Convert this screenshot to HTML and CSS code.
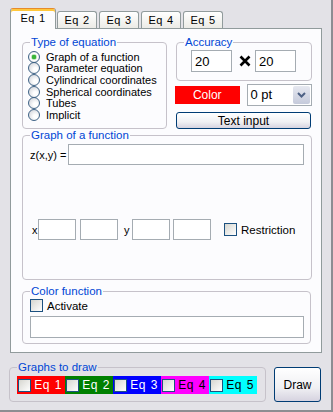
FILE: index.html
```html
<!DOCTYPE html>
<html lang="en">
<head>
  <meta charset="UTF-8">
  <meta name="viewport" content="width=device-width, initial-scale=1.0">
  <title>Graph settings</title>
  <link rel="stylesheet" href="styles.css">
</head>
<body>
  <div class="window">
    <div class="tabs">
      <div class="tab active">Eq 1</div>
      <div class="tab">Eq 2</div>
      <div class="tab">Eq 3</div>
      <div class="tab">Eq 4</div>
      <div class="tab">Eq 5</div>
    </div>

    <div class="panel">
      <div class="top-row">
        <fieldset class="group type-group">
          <legend>Type of equation</legend>
          <div class="radio-list">
            <label class="radio-row"><span class="radio checked"></span>Graph of a function</label>
            <label class="radio-row"><span class="radio"></span>Parameter equation</label>
            <label class="radio-row"><span class="radio"></span>Cylindrical coordinates</label>
            <label class="radio-row"><span class="radio"></span>Spherical coordinates</label>
            <label class="radio-row"><span class="radio"></span>Tubes</label>
            <label class="radio-row"><span class="radio"></span>Implicit</label>
          </div>
        </fieldset>

        <div class="right-col">
          <fieldset class="group accuracy">
            <legend>Accuracy</legend>
            <div class="acc-row">
              <input class="field acc-field" type="text" value="20">
              <svg class="times" width="12" height="12" viewBox="0 0 12 12">
                <path d="M1.5 1.5 L10.5 10.5 M10.5 1.5 L1.5 10.5" stroke="#000" stroke-width="2.6" fill="none"/>
              </svg>
              <input class="field acc-field" type="text" value="20">
            </div>
          </fieldset>
          <div class="color-row">
            <div class="color-btn">Color</div>
            <div class="select">
              <span class="select-value">0 pt</span>
              <span class="select-drop">
                <svg width="9" height="6" viewBox="0 0 9 6">
                  <path d="M1 1 L4.5 4.5 L8 1" stroke="#4d6185" stroke-width="2" fill="none"/>
                </svg>
              </span>
            </div>
          </div>
          <button class="btn text-input">Text input</button>
        </div>
      </div>

      <fieldset class="group graph-group">
        <legend>Graph of a function</legend>
        <div class="graph-body">
          <div class="z-row">
            <span class="z-label">z(x,y) =</span>
            <input class="field z-field" type="text">
          </div>
          <div class="xy-row">
            <span class="axis-label x-label">x</span>
            <input class="field small-field" type="text">
            <input class="field small-field gap-field" type="text">
            <span class="axis-label y-label">y</span>
            <input class="field small-field" type="text">
            <input class="field small-field gap-field-2" type="text">
            <label class="check-row restriction"><span class="check"></span>Restriction</label>
          </div>
        </div>
      </fieldset>

      <fieldset class="group colorfn-group">
        <legend>Color function</legend>
        <div class="colorfn-body">
          <label class="check-row"><span class="check"></span>Activate</label>
          <input class="field colorfn-field" type="text">
        </div>
      </fieldset>
    </div>

    <div class="bottom">
      <fieldset class="group draw-group">
        <legend>Graphs to draw</legend>
        <div class="eq-list">
          <div class="eq-item eq-red"><span class="check"></span><span class="eq-name">Eq 1</span></div>
          <div class="eq-item eq-green"><span class="check"></span><span class="eq-name">Eq 2</span></div>
          <div class="eq-item eq-blue"><span class="check"></span><span class="eq-name">Eq 3</span></div>
          <div class="eq-item eq-magenta"><span class="check"></span><span class="eq-name">Eq 4</span></div>
          <div class="eq-item eq-cyan"><span class="check"></span><span class="eq-name">Eq 5</span></div>
        </div>
      </fieldset>
      <button class="btn draw">Draw</button>
    </div>
  </div>
</body>
</html>
```

FILE: styles.css
```css
body {
  margin: 0;
  background-color: #e3e2e7;
  font-family: "Liberation Sans", Arial, sans-serif;
  font-size: 11px;
  color: #000;
}

.window {
  width: 333px;
  height: 412px;
  box-sizing: border-box;
  border-right: 2px solid #8d8d92;
  border-bottom: 2px solid #8d8d92;
  overflow: hidden;
}

/* tabs */

.tabs {
  display: flex;
  align-items: flex-end;
  height: 20px;
  margin-top: 8px;
  padding-left: 10px;
  gap: 2px;
}

.tab {
  box-sizing: border-box;
  width: 40px;
  height: 17px;
  border: 1px solid #919b9c;
  border-bottom: none;
  border-radius: 3px 3px 0 0;
  background: linear-gradient(#ffffff, #ecebe6);
  text-align: center;
  line-height: 16px;
  font-size: 11px;
  letter-spacing: 0.3px;
  word-spacing: 1px;
}

.tab.active {
  position: relative;
  z-index: 1;
  width: 46px;
  height: 21px;
  margin-bottom: -1px;
  margin-right: -1px;
  border-top: 1px solid #e68b2c;
  box-shadow: inset 0 2px #ffc73c;
  background: #fcfcfe;
  line-height: 18px;
}

.panel {
  box-sizing: border-box;
  width: 312px;
  margin-left: 10px;
  border: 1px solid #919b9c;
  background-color: #fcfcfe;
  padding: 7px 9px 8px 11px;
}

/* group boxes */

.group {
  margin: 0;
  padding: 0;
  min-width: 0;
  border: 1px solid #c6c2ca;
  border-radius: 4px;
}

.group legend {
  margin-left: 7px;
  padding: 0 1px;
  font-size: 11.5px;
  line-height: 13px;
  color: #0046d5;
}

.top-row {
  display: grid;
  grid-template-columns: 145px 137px;
  gap: 8px;
}

.radio-list {
  padding: 2px 0 6px 5px;
}

.radio-row {
  display: flex;
  align-items: center;
  height: 11.6px;
  white-space: nowrap;
}

.radio {
  box-sizing: border-box;
  width: 12px;
  height: 12px;
  margin-right: 6px;
  border: 1px solid #3f6386;
  border-radius: 50%;
  background: radial-gradient(circle at 65% 65%, #ffffff 20%, #d7d9de 80%);
  flex: none;
}

.radio.checked {
  background: radial-gradient(circle, #3ab53a 0 2px, #bfe3bf 2.5px, #ffffff 3.5px, #d7d9de 100%);
}

/* accuracy */

.accuracy {
  margin-left: 1px;
}

.acc-row {
  display: flex;
  align-items: center;
  padding: 1px 0 8px 14px;
}

.field {
  box-sizing: border-box;
  height: 21px;
  margin: 0;
  border: 1px solid #a5acb2;
  background: #fff;
  font-family: "Liberation Sans", Arial, sans-serif;
  font-size: 13px;
  padding: 0 3px;
  outline: none;
}

.acc-field {
  width: 41px;
  height: 22px;
}

.times {
  margin: 0 4px 0 7px;
}

.color-row {
  display: flex;
  align-items: center;
  height: 22px;
  margin-top: 3px;
}

.color-btn {
  width: 65px;
  height: 18px;
  line-height: 18px;
  background-color: #ff0000;
  color: #fff;
  text-align: center;
  font-size: 12px;
}

.select {
  box-sizing: border-box;
  display: flex;
  width: 66px;
  height: 22px;
  margin-left: 7px;
  border: 1px solid #a5acb2;
  background: #fff;
}

.select-value {
  flex: 1;
  padding-left: 3px;
  line-height: 20px;
  font-size: 13px;
}

.select-drop {
  display: flex;
  align-items: center;
  justify-content: center;
  width: 17px;
  margin: 1px;
  border-radius: 2px;
  background: linear-gradient(#e6e8f0, #c5cadb);
}

.btn {
  box-sizing: border-box;
  border: 1px solid #003c74;
  border-radius: 3px;
  background: linear-gradient(#ffffff 0%, #f0f0f3 60%, #d6d3e0 100%);
  font-family: "Liberation Sans", Arial, sans-serif;
  font-size: 12px;
  color: #000;
  padding: 0;
}

.text-input {
  width: 135px;
  height: 17px;
  margin: 6px 0 0 1px;
  line-height: 14px;
}

/* graph of a function */

.graph-group {
  margin-top: 0;
}

.graph-body {
  padding: 2px 7px 39px 7px;
}

.z-row {
  display: flex;
  align-items: center;
}

.z-label {
  width: 38px;
  font-size: 11px;
}

.z-field {
  flex: 1;
}

.xy-row {
  display: flex;
  align-items: center;
  margin-top: 54px;
}

.axis-label {
  font-size: 11px;
}

.x-label {
  width: 6px;
  padding-left: 2px;
}

.y-label {
  width: 8px;
  padding-left: 6px;
}

.small-field {
  width: 38px;
}

.gap-field {
  margin-left: 4px;
}

.gap-field-2 {
  margin-left: 3px;
}

.check-row {
  display: flex;
  align-items: center;
  height: 13px;
  font-size: 11.5px;
}

.check {
  box-sizing: border-box;
  width: 13px;
  height: 13px;
  border: 1px solid #1c5180;
  background: linear-gradient(135deg, #d6d6d0, #ffffff);
  flex: none;
}

.check-row .check {
  margin-right: 4px;
}

.restriction {
  margin-left: 13px;
}

/* color function */

.colorfn-group {
  margin-top: 5px;
  margin-right: 1px;
}

.colorfn-body {
  padding: 1px 6px 5px 7px;
}

.colorfn-field {
  display: block;
  width: 100%;
  height: 22px;
  margin-top: 4px;
}

/* graphs to draw */

.bottom {
  display: flex;
  align-items: flex-start;
  margin-top: 8px;
  padding-left: 9px;
}

.draw-group {
  width: 257px;
  box-sizing: border-box;
}

.eq-list {
  display: flex;
  padding: 2px 0 7px 7px;
}

.eq-item {
  display: flex;
  align-items: center;
  width: 48px;
  height: 18px;
  padding-left: 1px;
  box-sizing: border-box;
}

.eq-name {
  flex: 1;
  text-align: center;
  font-size: 12px;
  letter-spacing: 0.5px;
  word-spacing: 1px;
}

.eq-red { background-color: #ff0000; color: #fff; }
.eq-green { background-color: #008000; color: #fff; }
.eq-blue { background-color: #0000ff; color: #fff; }
.eq-magenta { background-color: #ff00ff; color: #000; }
.eq-cyan { background-color: #00ffff; color: #000; }

.draw {
  width: 47px;
  height: 35px;
  margin: 6px 0 0 8px;
}
```
